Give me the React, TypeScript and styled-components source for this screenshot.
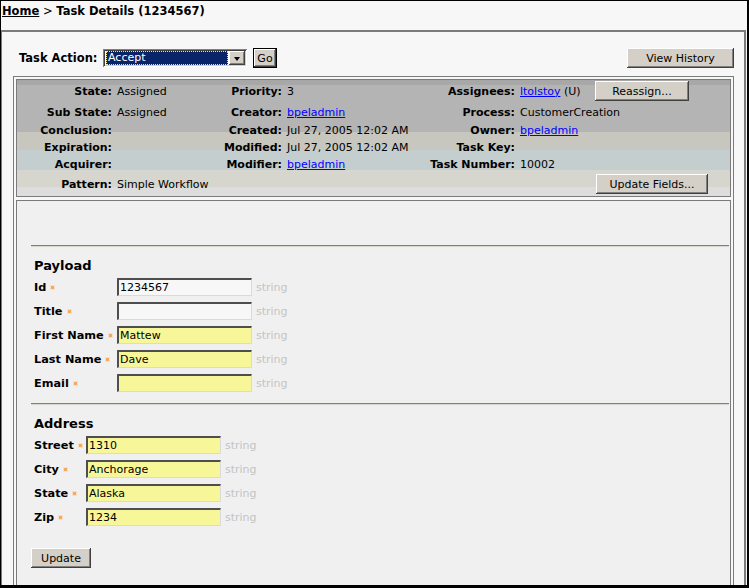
import React from 'react';
import styled, { createGlobalStyle } from 'styled-components';

const FONT = '"DejaVu Sans", Verdana, sans-serif';

const GlobalStyle = createGlobalStyle`
  html, body { margin: 0; padding: 0; background: #000; }
  body { font-family: ${FONT}; font-size: 11px; color: #000; }
  * { box-sizing: border-box; }
`;

const Frame = styled.div`
  width: 749px;
  height: 588px;
  border-style: solid;
  border-color: #000;
  border-width: 1px 2px 3px 1px;
  background: #f7f7f7;
  overflow: hidden;
  display: flex;
  flex-direction: column;
`;

const Breadcrumb = styled.div`
  flex: none;
  height: 29px;
  padding: 3px 0 0 1px;
  font-weight: bold;
  font-size: 11.5px;
  line-height: 14px;
  white-space: nowrap;
`;

const CrumbLink = styled.a`
  color: #000;
  text-decoration: underline;
  cursor: pointer;
`;

const CrumbSep = styled.span`
  font-weight: normal;
`;

const Main = styled.div`
  flex: 1;
  display: flex;
  flex-direction: column;
  border-style: solid;
  border-color: #7b7b7b;
  border-width: 2px 2px 0 1px;
  margin-right: 1px;
  padding: 0 10px 0 11px;
`;

const Toolbar = styled.div`
  flex: none;
  display: flex;
  align-items: center;
  height: 44px;
  padding: 16px 0 8px 6px;
`;

const ToolLabel = styled.span`
  width: 84px;
  font-weight: bold;
  font-size: 11.5px;
  white-space: nowrap;
`;

const SelectBox = styled.div`
  width: 144px;
  height: 18px;
  display: flex;
  padding: 2px;
  background: #fff;
  box-shadow: inset 1px 1px #808080, inset -1px -1px #ffffff, inset 2px 2px #404040,
    inset -2px -2px #d4d0c8;
`;

const SelectValue = styled.div`
  flex: 1;
  margin: 0 1px 0 1px;
  background: #0a246a;
  color: #fff;
  padding-left: 2px;
  line-height: 14px;
  outline: 1px dotted #f0e8a0;
  outline-offset: -1px;
`;

const SelectArrow = styled.div`
  width: 16px;
  display: flex;
  align-items: center;
  justify-content: center;
  background: #d4d0c8;
  box-shadow: inset -1px -1px #404040, inset 1px 1px #ffffff, inset -2px -2px #808080;
  &::after {
    content: '';
    width: 0;
    height: 0;
    border-left: 3.5px solid transparent;
    border-right: 3.5px solid transparent;
    border-top: 4px solid #000;
    margin-top: 1px;
  }
`;

const Button = styled.button<{ $w: number; $ml?: number; $default?: boolean }>`
  width: ${(p) => p.$w}px;
  height: 20px;
  margin: 0 0 0 ${(p) => p.$ml ?? 0}px;
  padding: 0;
  font-family: ${FONT};
  font-size: 11px;
  color: #000;
  background: #d4d0c8;
  border: ${(p) => (p.$default ? '1px solid #000' : '0')};
  box-shadow: inset -1px -1px #404040, inset 1px 1px #ffffff, inset -2px -2px #808080;
  white-space: nowrap;
  cursor: pointer;
`;

const Spacer = styled.div`
  flex: 1;
`;

const PanelOuter = styled.div`
  flex: 1;
  display: flex;
  flex-direction: column;
  gap: 3px;
  border: 1px solid #7b7b7b;
  border-bottom: 0;
  padding: 2px 2px 0 2px;
`;

const InfoCell = styled.div`
  flex: none;
  border: 1px solid #7b7b7b;
  padding-bottom: 1px;
  background: linear-gradient(
    to bottom,
    #a6a6a6 0px,
    #a9a9a9 5px,
    #b4b4b4 5px,
    #b4b4b4 52px,
    #c7c7bf 52px,
    #c7c7bf 70px,
    #c5cece 70px,
    #c5cece 90px,
    #d6d6ce 90px,
    #d6d6ce 107px,
    #dddddd 107px
  );
  display: grid;
  grid-template-columns: 97px 86px 84px 136px 97px 76px 1fr;
  grid-template-rows: 22px 20px 17px 17px 17px 22px;
  align-items: center;
`;

const InfoLabel = styled.div`
  font-weight: bold;
  text-align: right;
  padding-right: 2px;
  white-space: nowrap;
`;

const InfoValue = styled.div`
  padding-left: 3px;
  white-space: nowrap;
`;

const Link = styled.a`
  color: #0000ff;
  text-decoration: underline;
  cursor: pointer;
`;

const ButtonCell = styled.div`
  display: flex;
  align-items: center;
`;

const FormCell = styled.div`
  flex: 1;
  border: 1px solid #7b7b7b;
  border-bottom: 0;
  background: #f0f0f0;
  padding: 44px 1px 0 14px;
`;

const Rule = styled.div<{ $mt?: number }>`
  height: 2px;
  margin-top: ${(p) => p.$mt ?? 0}px;
  border-top: 1px solid #808080;
  border-bottom: 1px solid #d6d6ce;
`;

const Section = styled.div`
  padding-left: 3px;
`;

const SectionTitle = styled.div`
  font-weight: bold;
  font-size: 13px;
  line-height: 16px;
  margin: 11px 0 4px;
`;

const FieldGrid = styled.div<{ $labelW: number }>`
  display: grid;
  grid-template-columns: ${(p) => p.$labelW}px 135px max-content;
  row-gap: 6px;
  align-items: center;
`;

const FieldLabel = styled.label`
  display: flex;
  align-items: center;
  font-weight: bold;
  font-size: 11.3px;
  white-space: nowrap;
`;

const Req = styled.span`
  display: inline-block;
  width: 3px;
  height: 3px;
  margin-left: 5px;
  background: #f2aa62;
  box-shadow: 0 0 0 1px rgba(250, 214, 176, 0.7);
`;

const FieldInput = styled.input<{ $yellow?: boolean }>`
  width: 135px;
  height: 18px;
  margin: 0;
  padding: 0 0 0 1px;
  font-family: ${FONT};
  font-size: 11px;
  color: #000;
  background: ${(p) => (p.$yellow ? '#f7f799' : '#f7f7f7')};
  border-style: solid;
  border-width: 2px 1px 1px 2px;
  border-color: #4e4e4e #dadada #dadada #4e4e4e;
  outline: none;
`;

const TypeHint = styled.span`
  color: #c4c4c4;
  padding-left: 4px;
`;

const UpdateRow = styled.div`
  margin-top: 22px;
`;

type Field = { label: string; value: string; yellow: boolean };

const payload: Field[] = [
  { label: 'Id', value: '1234567', yellow: false },
  { label: 'Title', value: '', yellow: false },
  { label: 'First Name', value: 'Mattew', yellow: true },
  { label: 'Last Name', value: 'Dave', yellow: true },
  { label: 'Email', value: '', yellow: true },
];

const address: Field[] = [
  { label: 'Street', value: '1310', yellow: true },
  { label: 'City', value: 'Anchorage', yellow: true },
  { label: 'State', value: 'Alaska', yellow: true },
  { label: 'Zip', value: '1234', yellow: true },
];

function Fields({ title, fields, labelW }: { title: string; fields: Field[]; labelW: number }) {
  return (
    <Section>
      <SectionTitle>{title}</SectionTitle>
      <FieldGrid $labelW={labelW}>
        {fields.map((f) => (
          <React.Fragment key={f.label}>
            <FieldLabel>
              {f.label}
              <Req />
            </FieldLabel>
            <FieldInput $yellow={f.yellow} defaultValue={f.value} readOnly />
            <TypeHint>string</TypeHint>
          </React.Fragment>
        ))}
      </FieldGrid>
    </Section>
  );
}

export default function App() {
  return (
    <>
      <GlobalStyle />
      <Frame>
        <Breadcrumb>
          <CrumbLink>Home</CrumbLink>
          <CrumbSep> &gt; </CrumbSep>
          Task Details (1234567)
        </Breadcrumb>
        <Main>
          <Toolbar>
            <ToolLabel>Task Action:</ToolLabel>
            <SelectBox>
              <SelectValue>Accept</SelectValue>
              <SelectArrow />
            </SelectBox>
            <Button $w={24} $ml={6} $default>
              Go
            </Button>
            <Spacer />
            <Button $w={107}>View History</Button>
          </Toolbar>
          <PanelOuter>
            <InfoCell>
              <InfoLabel>State:</InfoLabel>
              <InfoValue>Assigned</InfoValue>
              <InfoLabel>Priority:</InfoLabel>
              <InfoValue>3</InfoValue>
              <InfoLabel>Assignees:</InfoLabel>
              <InfoValue>
                <Link>ltolstoy</Link> (U)
              </InfoValue>
              <ButtonCell>
                <Button $w={94} $ml={2}>
                  Reassign...
                </Button>
              </ButtonCell>

              <InfoLabel>Sub State:</InfoLabel>
              <InfoValue>Assigned</InfoValue>
              <InfoLabel>Creator:</InfoLabel>
              <InfoValue>
                <Link>bpeladmin</Link>
              </InfoValue>
              <InfoLabel>Process:</InfoLabel>
              <InfoValue>CustomerCreation</InfoValue>
              <div />

              <InfoLabel>Conclusion:</InfoLabel>
              <InfoValue />
              <InfoLabel>Created:</InfoLabel>
              <InfoValue>Jul 27, 2005 12:02 AM</InfoValue>
              <InfoLabel>Owner:</InfoLabel>
              <InfoValue>
                <Link>bpeladmin</Link>
              </InfoValue>
              <div />

              <InfoLabel>Expiration:</InfoLabel>
              <InfoValue />
              <InfoLabel>Modified:</InfoLabel>
              <InfoValue>Jul 27, 2005 12:02 AM</InfoValue>
              <InfoLabel>Task Key:</InfoLabel>
              <InfoValue />
              <div />

              <InfoLabel>Acquirer:</InfoLabel>
              <InfoValue />
              <InfoLabel>Modifier:</InfoLabel>
              <InfoValue>
                <Link>bpeladmin</Link>
              </InfoValue>
              <InfoLabel>Task Number:</InfoLabel>
              <InfoValue>10002</InfoValue>
              <div />

              <InfoLabel>Pattern:</InfoLabel>
              <InfoValue>Simple Workflow</InfoValue>
              <div />
              <div />
              <div />
              <div />
              <ButtonCell>
                <Button $w={112} $ml={3}>
                  Update Fields...
                </Button>
              </ButtonCell>
            </InfoCell>
            <FormCell>
              <Rule />
              <Fields title="Payload" fields={payload} labelW={83} />
              <Rule $mt={11} />
              <Fields title="Address" fields={address} labelW={52} />
              <UpdateRow>
                <Button $w={60}>Update</Button>
              </UpdateRow>
            </FormCell>
          </PanelOuter>
        </Main>
      </Frame>
    </>
  );
}
